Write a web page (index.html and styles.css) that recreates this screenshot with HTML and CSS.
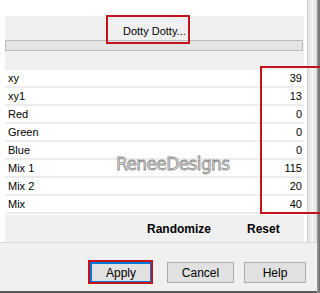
FILE: index.html
```html
<!DOCTYPE html>
<html lang="en">
<head>
    <meta charset="UTF-8">
    <meta name="viewport" content="width=device-width, initial-scale=1.0">
    <title>Dotty Dotty</title>
    <link rel="stylesheet" href="styles.css">
</head>
<body>
    <div class="window">
        <div class="dialog">
            <div class="top">
                <div class="main">
                    <div class="header">
                        <div class="title-row">
                            <span class="title">Dotty Dotty...</span>
                        </div>
                        <div class="bar"></div>
                        <div class="mark title-mark"></div>
                    </div>
                    <div class="rows">
                        <div class="row"><span>xy</span><span>39</span></div>
                        <div class="row"><span>xy1</span><span>13</span></div>
                        <div class="row"><span>Red</span><span>0</span></div>
                        <div class="row"><span>Green</span><span>0</span></div>
                        <div class="row"><span>Blue</span><span>0</span></div>
                        <div class="row"><span>Mix 1</span><span>115</span></div>
                        <div class="row"><span>Mix 2</span><span>20</span></div>
                        <div class="row"><span>Mix</span><span>40</span></div>
                        <div class="watermark">ReneeDesigns</div>
                        <div class="mark values-mark"></div>
                    </div>
                    <div class="actions">
                        <span class="randomize">Randomize</span>
                        <span class="reset">Reset</span>
                    </div>
                </div>
                <div class="track"><div class="thumb"></div></div>
            </div>
            <div class="bottom">
                <div class="btn-wrap">
                    <button class="btn default">Apply</button>
                    <div class="mark apply-mark"></div>
                </div>
                <button class="btn cancel">Cancel</button>
                <button class="btn help">Help</button>
            </div>
        </div>
        <div class="edge"></div>
    </div>
</body>
</html>
```

FILE: styles.css
```css
html, body {
    margin: 0;
    padding: 0;
}
body {
    width: 320px;
    height: 293px;
    overflow: hidden;
    background-color: #fff;
    font-family: "Liberation Sans", Arial, sans-serif;
    font-size: 11px;
    color: #000;
}
.window {
    display: flex;
    height: 293px;
}
.dialog {
    width: 317px;
    display: flex;
    flex-direction: column;
}
.edge {
    width: 3px;
    background: linear-gradient(to right, #a0a0a0, #6a6a6a);
}
.top {
    display: flex;
    height: 242px;
}
.main {
    width: 299px;
    padding: 16px 0 0 5px;
    background-color: #fff;
    display: flex;
    flex-direction: column;
}
.track {
    width: 13px;
    background-color: #fff;
    display: flex;
    justify-content: flex-end;
}
.thumb {
    width: 9px;
    background: linear-gradient(to right, #e2e2e2, #f4f4f4 50%, #dcdcdc);
    border-left: 1px solid #d0d0d0;
}
.header {
    position: relative;
    height: 55px;
    background-color: #f0f0f0;
}
.title-row {
    height: 24px;
    display: flex;
    align-items: center;
    padding-left: 118px;
}
.title {
    padding-top: 6px;
}
.bar {
    height: 9px;
    margin-right: 1px;
    border: 1px solid #bdbdbd;
    background-color: #e4e4e4;
}
.rows {
    position: relative;
}
.row {
    height: 16px;
    display: flex;
    justify-content: space-between;
    align-items: center;
    padding: 0 2px 0 3px;
    background-color: #fff;
    border-bottom: 2px solid #ececec;
}
.row:last-of-type {
    border-bottom: none;
}
.watermark {
    position: absolute;
    left: 111px;
    top: 84px;
    font-family: "DejaVu Sans", sans-serif;
    font-size: 17px;
    letter-spacing: -0.6px;
    color: #ececec;
    -webkit-text-stroke: 0.8px #8a8a8a;
}
.actions {
    height: 27px;
    margin-top: 1px;
    background-color: #f0f0f0;
    display: flex;
    align-items: center;
    font-weight: bold;
    font-size: 12px;
}
.randomize {
    margin-left: 142px;
}
.reset {
    margin-left: 36px;
}
.bottom {
    flex: 1;
    background-color: #f0f0f0;
    border-top: 1px solid #dadada;
    border-bottom: 2px solid #5a5a5a;
    display: flex;
    align-items: flex-start;
    padding-top: 19px;
}
.btn {
    height: 21px;
    width: 62px;
    padding: 0;
    font-family: "Liberation Sans", Arial, sans-serif;
    font-size: 12px;
    color: #000;
    background-color: #e1e1e1;
    border: 1px solid #adadad;
    border-radius: 0;
}
.btn.default {
    border-color: #0078d7;
    box-shadow: inset 0 0 0 1px #0078d7;
}
.btn-wrap {
    position: relative;
    margin-left: 90px;
}
.cancel {
    margin-left: 15px;
    width: 67px;
}
.help {
    margin-left: 10px;
}
.mark {
    position: absolute;
    border: 2px solid #c4141b;
}
.title-mark {
    left: 101px;
    top: -1px;
    width: 80px;
    height: 25px;
}
.values-mark {
    left: 255px;
    top: -4px;
    width: 70px;
    height: 144px;
}
.apply-mark {
    left: -2px;
    top: -2px;
    width: 61px;
    height: 20px;
}
```
